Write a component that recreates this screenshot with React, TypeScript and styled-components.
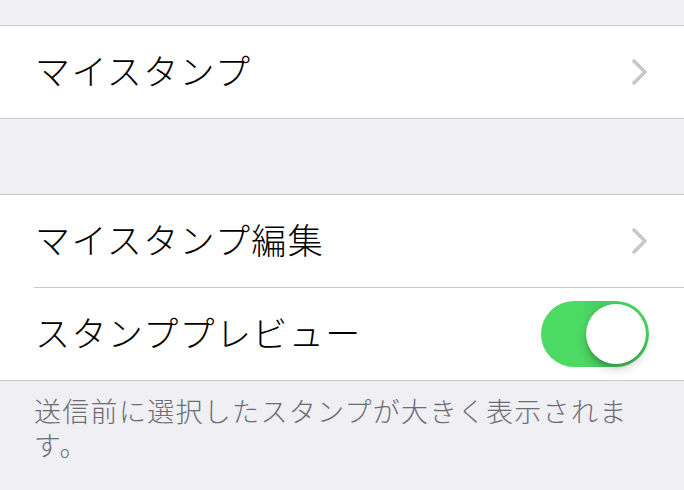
import * as React from "react";
import styled, { createGlobalStyle } from "styled-components";

const GlobalStyle = createGlobalStyle`
  html, body {
    margin: 0;
    padding: 0;
    background: #efeff4;
  }
  body {
    font-family: "Noto Sans CJK JP", "Noto Sans", sans-serif;
    -webkit-font-smoothing: antialiased;
  }
`;

const Screen = styled.div`
  width: 684px;
  height: 490px;
  overflow: hidden;
  background: #efeff4;
  display: flex;
  flex-direction: column;
`;

const Gap = styled.div<{ $h: number }>`
  height: ${(p) => p.$h}px;
  flex-shrink: 0;
`;

const Group = styled.div`
  background: #fff;
  border-top: 1px solid #c8c7cc;
  border-bottom: 1px solid #c8c7cc;
  display: flex;
  flex-direction: column;
  gap: 1px;
`;

const Row = styled.div<{ $divider?: boolean }>`
  height: 92px;
  padding: 0 35px 0 35px;
  display: flex;
  align-items: center;
  justify-content: space-between;
  position: relative;
  ${(p) =>
    p.$divider &&
    `
    &::after {
      content: "";
      position: absolute;
      left: 34px;
      right: 0;
      bottom: -1px;
      height: 1px;
      background: #c8c7cc;
    }
  `}
`;

const Label = styled.span`
  font-size: 35px;
  font-weight: 300;
  color: #000;
  letter-spacing: 1.4px;
  line-height: 1;
  padding-bottom: 5px;
`;

const Footer = styled.p`
  margin: 0;
  padding: 13px 34px 0 34px;
  font-size: 27px;
  font-weight: 300;
  letter-spacing: 1.3px;
  line-height: 34px;
  color: #6d6d72;
  line-break: strict;
`;

const Track = styled.div<{ $on: boolean }>`
  width: 108px;
  height: 66px;
  border-radius: 33px;
  background: ${(p) => (p.$on ? "#4cd964" : "#e5e5ea")};
  background-image: linear-gradient(
    90deg,
    rgba(0, 0, 0, 0) 0%,
    rgba(0, 0, 0, 0) 38%,
    rgba(0, 60, 20, 0.08) 55%,
    rgba(0, 0, 0, 0) 100%
  );
  position: relative;
  flex-shrink: 0;
`;

const Knob = styled.div<{ $on: boolean }>`
  position: absolute;
  top: 3px;
  left: ${(p) => (p.$on ? "45px" : "3px")};
  width: 60px;
  height: 60px;
  border-radius: 50%;
  background: #fff;
  box-shadow: 0 0 0 1px rgba(0, 0, 0, 0.04), 0 4px 2px rgba(0, 0, 0, 0.08),
    0 5px 10px rgba(0, 0, 0, 0.18);
`;

const Chevron = () => (
  <svg width="18" height="28" viewBox="0 0 18 28" fill="none">
    <path
      d="M3 3 L14 14 L3 25"
      stroke="#c7c7cc"
      strokeWidth="3.6"
      strokeLinecap="round"
      strokeLinejoin="round"
    />
  </svg>
);

const Toggle = ({ on }: { on: boolean }) => (
  <Track $on={on}>
    <Knob $on={on} />
  </Track>
);

export default function App() {
  const [preview] = React.useState(true);

  return (
    <>
      <GlobalStyle />
      <Screen>
        <Gap $h={25} />
        <Group>
          <Row>
            <Label>マイスタンプ</Label>
            <Chevron />
          </Row>
        </Group>
        <Gap $h={75} />
        <Group>
          <Row $divider>
            <Label>マイスタンプ編集</Label>
            <Chevron />
          </Row>
          <Row>
            <Label>スタンププレビュー</Label>
            <Toggle on={preview} />
          </Row>
        </Group>
        <Footer>送信前に選択したスタンプが大きく表示されます。</Footer>
      </Screen>
    </>
  );
}
